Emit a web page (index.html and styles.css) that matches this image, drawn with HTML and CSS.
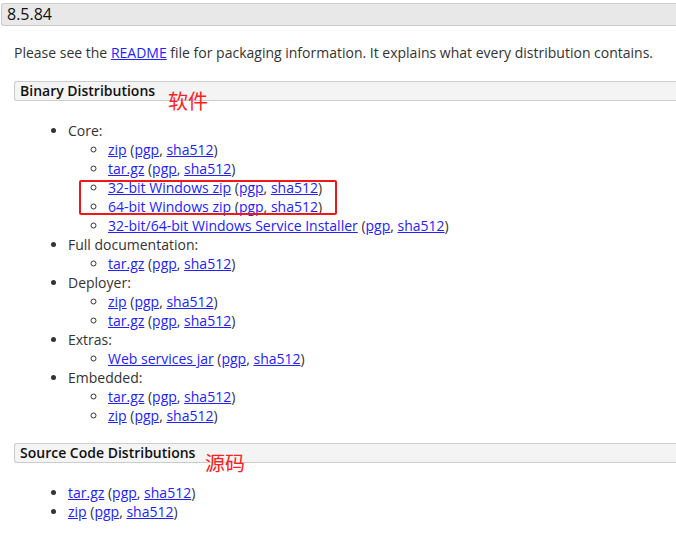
FILE: index.html
```html
<!DOCTYPE html>
<html lang="en">
<head>
  <meta charset="UTF-8">
  <title>Tomcat 8.5.84</title>
  <link rel="stylesheet" href="styles.css">
</head>
<body>

<h2 class="version">8.5.84</h2>

<div class="content">
  <p class="intro">Please see the <a href="#">README</a> file for packaging information. It explains what every distribution contains.</p>

  <!-- Binaires -->
  <div class="section">
    <h3 class="section-title">Binary Distributions</h3>
    <span class="note note-bin">软件</span>
    <ul class="dist">
      <li>Core:
        <ul class="sub">
          <li><a href="#">zip</a> (<a href="#">pgp</a>, <a href="#">sha512</a>)</li>
          <li><a href="#">tar.gz</a> (<a href="#">pgp</a>, <a href="#">sha512</a>)</li>
          <li><a href="#">32-bit Windows zip</a> (<a href="#">pgp</a>, <a href="#">sha512</a>)</li>
          <li><a href="#">64-bit Windows zip</a> (<a href="#">pgp</a>, <a href="#">sha512</a>)</li>
          <li><a href="#">32-bit/64-bit Windows Service Installer</a> (<a href="#">pgp</a>, <a href="#">sha512</a>)</li>
        </ul>
        <span class="mark"></span>
      </li>
      <li>Full documentation:
        <ul class="sub">
          <li><a href="#">tar.gz</a> (<a href="#">pgp</a>, <a href="#">sha512</a>)</li>
        </ul>
      </li>
      <li>Deployer:
        <ul class="sub">
          <li><a href="#">zip</a> (<a href="#">pgp</a>, <a href="#">sha512</a>)</li>
          <li><a href="#">tar.gz</a> (<a href="#">pgp</a>, <a href="#">sha512</a>)</li>
        </ul>
      </li>
      <li>Extras:
        <ul class="sub">
          <li><a href="#">Web services jar</a> (<a href="#">pgp</a>, <a href="#">sha512</a>)</li>
        </ul>
      </li>
      <li>Embedded:
        <ul class="sub">
          <li><a href="#">tar.gz</a> (<a href="#">pgp</a>, <a href="#">sha512</a>)</li>
          <li><a href="#">zip</a> (<a href="#">pgp</a>, <a href="#">sha512</a>)</li>
        </ul>
      </li>
    </ul>
  </div>

  <!-- Sources -->
  <div class="section">
    <h3 class="section-title">Source Code Distributions</h3>
    <span class="note note-src">源码</span>
    <ul class="dist">
      <li><a href="#">tar.gz</a> (<a href="#">pgp</a>, <a href="#">sha512</a>)</li>
      <li><a href="#">zip</a> (<a href="#">pgp</a>, <a href="#">sha512</a>)</li>
    </ul>
  </div>
</div>

</body>
</html>
```

FILE: styles.css
```css
body {
  font-family: "Open Sans", "Noto Sans", sans-serif;
  font-size: 14px;
  line-height: 19px;
  color: #333;
  background-color: #fff;
  margin: 0;
}

a {
  color: #2222ff;
  text-decoration: underline;
}

.version {
  margin: 3px 0 0 1px;
  height: 21px;
  padding-left: 5px;
  background-color: #e8e8e8;
  border: 1px solid #ccc;
  border-right: none;
  border-radius: 3px 0 0 3px;
  font-size: 16px;
  font-weight: normal;
  line-height: 21px;
  color: #111;
}

.content {
  padding-left: 14px;
}

.intro {
  margin: 17px 0 19px 0;
}

.section {
  position: relative;
}

.section-title {
  margin: 0;
  height: 18px;
  padding-left: 5px;
  background-color: #f4f4f4;
  border: 1px solid #ccc;
  border-right: none;
  border-radius: 3px 0 0 3px;
  font-size: 14px;
  font-weight: 600;
  line-height: 18px;
  color: #111;
}

.note {
  position: absolute;
  font-family: "Noto Sans CJK SC", sans-serif;
  font-size: 20px;
  line-height: 24px;
  color: #ff2020;
}

.note-bin {
  left: 154px;
  top: 8px;
}

.note-src {
  left: 191px;
  top: 8px;
}

.dist {
  margin: 20px 0 18px 14px;
  padding-left: 40px;
  list-style: disc;
}

.sub {
  margin: 0;
  padding-left: 40px;
  list-style: circle;
}

.mark {
  position: absolute;
  left: 65px;
  top: 99px;
  width: 254px;
  height: 31px;
  border: 2px solid #f01818;
  border-radius: 2px;
}
```
